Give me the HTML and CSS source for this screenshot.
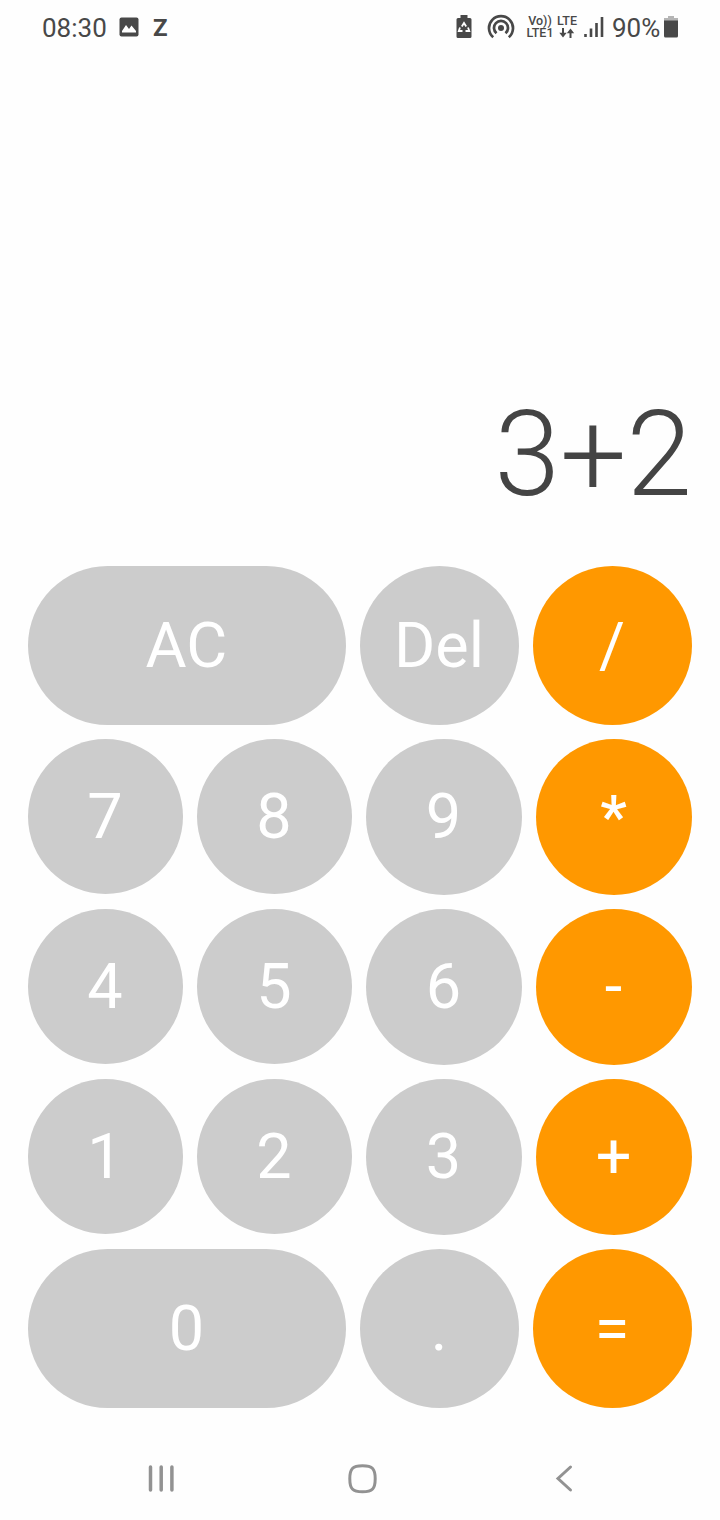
FILE: index.html
```html
<!DOCTYPE html>
<html lang="en">
<head>
<meta charset="utf-8">
<meta name="viewport" content="width=device-width">
<title>Calculator</title>
<link rel="stylesheet" href="styles.css">
</head>
<body>
<div class="screen">
  <header class="status">
    <span class="clock">08:30</span>
    <svg class="picture" width="20" height="20" viewBox="0 0 20 20"><rect x=".5" y=".5" width="19" height="19" rx="2" fill="#484848"/><path d="M3 15.500V14l4-6 3 4 2.500-3.500 4.500 5.500v1.500z" fill="#fff"/></svg>
    <span class="zed">Z</span>
    <svg class="saver" width="16" height="24" viewBox="0 0 16 24"><path d="M4.500 0h7v3H14q1.500 0 1.500 1.500v17q0 1.500-1.500 1.500H2Q.5 23 .5 21.500v-17Q.5 3 2 3h2.500z" fill="#484848"/><path d="M5.800 11.500 8 8l2.200 3.500M12 12.500l1.300 3.500H9.500M6.500 16H2.800L4 12.500" fill="none" stroke="#fff" stroke-width="1.800"/></svg>
    <svg class="hotspot" width="28" height="26" viewBox="0 0 28 26"><circle cx="14" cy="14" r="3" fill="#484848"/><path d="M9.500 19.300a7 7 0 1 1 9 0M6.200 23.300a12 12 0 1 1 15.600 0" fill="none" stroke="#484848" stroke-width="2.700"/></svg>
    <div class="volte"><span>Vo))</span><span>LTE1</span></div>
    <div class="data"><span>LTE</span><svg width="16" height="10" viewBox="0 0 16 10"><path d="M4 0v7M11.500 10V3" stroke="#484848" stroke-width="2"/><path d="M.3 4.800h7.400L4 9.500zM7.800 5.200h7.400L11.500.5z" fill="#484848"/></svg></div>
    <svg class="signal" width="20" height="22" viewBox="0 0 20 22"><path d="M1.500 18v3M7 12.500V21M12.500 7v14M18 1v20" stroke="#484848" stroke-width="2.600"/></svg>
    <span class="percent">90%</span>
    <svg class="battery" width="14" height="22" viewBox="0 0 14 22"><path d="M4 0h6v2h4v3H0V2h4z" fill="#b5b5b5"/><path d="M0 4.500h14V20q0 1.500-1.500 1.500h-11Q0 21.500 0 20z" fill="#484848"/></svg>
  </header>
  <output class="display">3+2</output>
  <main class="keypad">
    <div class="row wide"><button class="key">AC</button><button class="key">Del</button><button class="key op">/</button></div>
    <div class="row"><button class="key">7</button><button class="key">8</button><button class="key">9</button><button class="key op bold">*</button></div>
    <div class="row"><button class="key">4</button><button class="key">5</button><button class="key">6</button><button class="key op">-</button></div>
    <div class="row"><button class="key">1</button><button class="key">2</button><button class="key">3</button><button class="key op">+</button></div>
    <div class="row wide"><button class="key">0</button><button class="key">.</button><button class="key op">=</button></div>
  </main>
  <nav class="navbar">
    <svg width="30" height="30" viewBox="0 0 30 30"><path d="M5.500 3v23M16.200 3v23M26.900 3v23" stroke="#929292" stroke-width="3.500" stroke-linecap="round"/></svg>
    <svg width="30" height="30" viewBox="0 0 30 30"><path d="M15.500 1.700c10 0 12.700 3 12.700 13s-2.700 13-12.700 13-12.700-3-12.700-13 2.700-13 12.700-13z" fill="none" stroke="#929292" stroke-width="3"/></svg>
    <svg width="30" height="30" viewBox="0 0 30 30"><path d="M21.500 3 9 14.500 21.500 26" fill="none" stroke="#929292" stroke-width="3" stroke-linecap="round"/></svg>
  </nav>
</div>
</body>
</html>
```
FILE: styles.css
```css
body {
  margin: 0;
  background: #fefefe;
  font-family: Roboto, sans-serif;
}

.screen {
  width: 720px;
  height: 1520px;
  overflow: hidden;
  display: flex;
  flex-direction: column;
}

.status {
  height: 56px;
  box-sizing: border-box;
  padding: 0 42px;
  display: flex;
  align-items: center;
  color: #484848;
}

.status svg { flex: none; }

.clock, .percent {
  font-size: 26px;
  line-height: 56px;
}

.clock { width: 77px; }
.picture { margin: 0 14px 2px 0; }
.zed { font-size: 24px; font-weight: 700; line-height: 54px; }
.saver { margin: 0 15px 3px auto; }
.hotspot { margin: 0 12px 2px 0; }

.volte, .data {
  display: flex;
  flex-direction: column;
  align-items: center;
  height: 24px;
  margin-bottom: 2px;
  font-size: 12.500px;
  line-height: 12px;
  font-weight: 500;
}

.volte { width: 26px; margin-right: 4px; }
.data { width: 20px; margin-right: 7px; }
.data svg { margin-top: 1px; }
.signal { margin: 0 8px 2px 0; }
.percent { width: 52px; }
.battery { margin-bottom: 2px; }

.display {
  height: 510px;
  box-sizing: border-box;
  padding: 329px 28px 0 0;
  text-align: right;
  font-size: 118px;
  line-height: 140px;
  font-weight: 300;
  color: #444;
}

.keypad {
  padding: 0 28px;
  display: flex;
  flex-direction: column;
  gap: 14px;
}

.row {
  display: grid;
  grid-template-columns: 155px 155px 156px 156px;
  gap: 14px;
  height: 156px;
  align-items: start;
}

.row.wide {
  grid-template-columns: 2fr 1fr 1fr;
  height: 159px;
  align-items: stretch;
}

.key {
  border: 0;
  padding: 0 1px 1px 0;
  border-radius: 80px;
  background: #ccc;
  color: #fff;
  font: 400 63px/1 Roboto, sans-serif;
}

.row:not(.wide) .key {
  aspect-ratio: 1;
  box-sizing: border-box;
}

.key.op { background: #ff9800; }
.key.bold { font-weight: 500; font-size: 60px; }

.navbar {
  margin-top: 56px;
  padding: 0 141px 0 145px;
  display: flex;
  justify-content: space-between;
}
```
